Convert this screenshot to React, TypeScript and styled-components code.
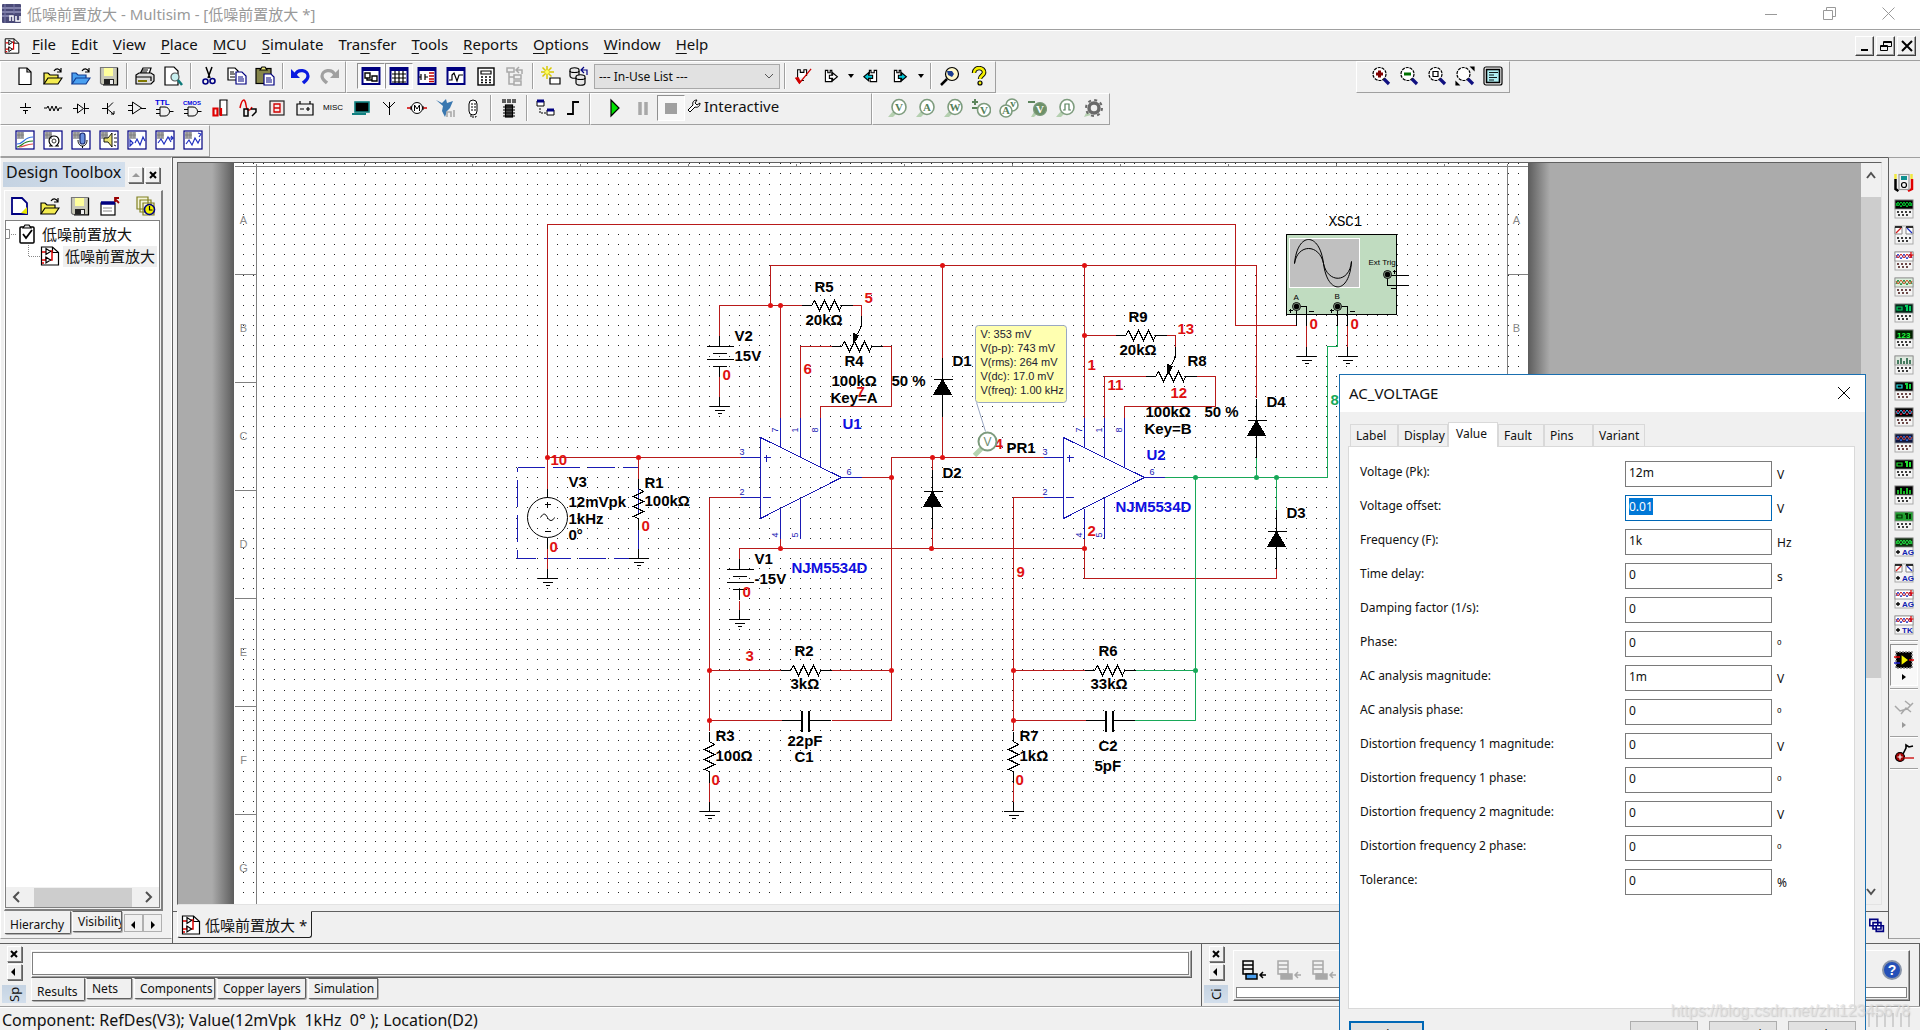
import React, { useEffect, useRef } from "react";
import styled, { createGlobalStyle, css } from "styled-components";

const UI = `"Noto Sans", "Noto Sans CJK SC", sans-serif`;
const FACE = "#f0f0f0";
const NAVY = "#000080";

const Global = createGlobalStyle`
  * { box-sizing: border-box; }
  html, body { margin: 0; height: 100%; overflow: hidden; }
  body { background: ${FACE}; font-family: ${UI}; font-size: 15px; color: #111; }
  button, input, select { font-family: inherit; color: inherit; }
`;

const raised = css`
  border: 1px solid;
  border-color: #fff #808080 #808080 #fff;
`;

/* ---------- window chrome ---------- */

const Screen = styled.div`
  position: relative;
  display: flex;
  flex-direction: column;
  height: 100vh;
  overflow: hidden;
  background: ${FACE};
`;

const TitleBar = styled.header`
  flex: none;
  display: flex;
  align-items: center;
  height: 30px;
  padding: 0 0 2px 2px;
  background: #fff;
  border-bottom: 1px solid #a0a0a0;
  color: #999;
  line-height: 24px;
  & > svg { margin-right: 6px; }
`;

const WindowButtons = styled.div`
  display: flex;
  margin-left: auto;
  padding-right: 2px;
`;

const WindowButton = styled.button`
  display: grid;
  place-items: center;
  width: 59px;
  height: 24px;
  padding: 0;
  border: 0;
  background: none;
  color: #999;
`;

const MenuBar = styled.nav`
  flex: none;
  display: flex;
  align-items: center;
  height: 31px;
  padding: 0 4px;
  border-top: 1px solid #fff;
  border-bottom: 1px solid #a0a0a0;
  & > svg { margin-right: 4px; }
`;

const MenuItem = styled.button`
  padding: 0 7px 4px 8px;
  border: 0;
  background: none;
  font-size: 15px;
  line-height: 24px;
  u { text-underline-offset: 3px; }
`;

const MdiButtons = styled.div`
  display: flex;
  gap: 2px;
  margin-left: auto;
`;

const MdiButton = styled.button`
  width: 19px;
  height: 20px;
  padding: 0;
  background: ${FACE};
  border: 1px solid;
  border-color: #fff #404040 #404040 #fff;
  box-shadow: inset -1px -1px #a0a0a0;
  display: grid;
  place-items: center;
`;

/* ---------- toolbars ---------- */

const ToolRow = styled.div`
  flex: none;
  display: flex;
  height: 32px;
`;

const Toolbar = styled.div<{ $push?: number }>`
  display: flex;
  align-items: center;
  padding: 0 2px 2px 10px;
  margin-left: ${(p) => p.$push ?? 0}px;
  border: 1px solid;
  border-color: #fff #a0a0a0 #a0a0a0 #fff;
`;

const ToolButton = styled.button<{ $w?: number; $on?: boolean }>`
  flex: none;
  display: grid;
  place-items: center;
  width: ${(p) => p.$w ?? 28}px;
  height: 26px;
  padding: 0;
  border: 1px solid transparent;
  background: none;
  ${(p) =>
    p.$on &&
    css`
      background: #f8f8f8;
      border-color: #909090 #fff #fff #909090;
    `}
`;

const Divider = styled.i`
  width: 2px;
  height: 26px;
  margin: 0 3px;
  border-left: 1px solid #a0a0a0;
  border-right: 1px solid #fff;
`;

const InUseList = styled.select`
  width: 186px;
  height: 25px;
  padding: 0 4px;
  margin: 0 1px;
  border: 1px solid #a8a8a8;
  border-radius: 0;
  appearance: none;
  font-size: 12px;
  background: #e1e1e1;
`;

const SelectWrap = styled.label`
  display: flex;
  align-items: center;
  & > svg { margin-left: -17px; margin-right: 7px; pointer-events: none; }
`;

const Interactive = styled.button`
  display: flex;
  align-items: center;
  gap: 3px;
  width: 184px;
  padding: 0 0 4px 2px;
  border: 0;
  background: none;
  font-size: 15px;
  line-height: 22px;
`;

/* ---------- main area ---------- */

const Main = styled.main`
  flex: 1;
  min-height: 0;
  display: flex;
`;

const Side = styled.aside`
  flex: none;
  display: flex;
  flex-direction: column;
  width: 172px;
  padding: 4px 8px 0 3px;
  margin-bottom: 4px;
  border: 1px solid;
  border-color: #a0a0a0 #fff #a0a0a0 #fff;
`;

const SideHead = styled.div`
  display: flex;
  align-items: center;
  gap: 2px;
`;

const SideTitle = styled.h2`
  width: 122px;
  height: 25px;
  margin: 0 1px 0 -1px;
  padding-left: 3px;
  background: linear-gradient(90deg, #c5d3e2, #d3dfec);
  font-size: 16px;
  font-weight: 400;
  line-height: 20px;
  white-space: nowrap;
`;

const SmallButton = styled.button`
  display: grid;
  place-items: center;
  width: 15px;
  height: 16px;
  padding: 0;
  background: ${FACE};
  ${raised}
  box-shadow: 1px 1px #606060;
`;

const SideBody = styled.div`
  flex: 1;
  min-height: 0;
  display: flex;
  flex-direction: column;
  margin-top: 3px;
  width: 159px;
  border: solid;
  border-width: 1px 2px 2px 1px;
  border-color: #fff #808080 #808080 #fff;
`;

const SideTools = styled.div`
  display: flex;
  align-items: center;
  height: 29px;
  padding-left: 5px;
  gap: 10px;
  & > :last-child { margin-left: 6px; }
`;

const SideTool = styled.button`
  width: 20px;
  height: 20px;
  padding: 0;
  border: 0;
  background: none;
`;

const Tree = styled.div`
  flex: 1;
  min-height: 0;
  display: flex;
  flex-direction: column;
  background: #fff;
  border: 1px solid #808080;
  margin: 0 1px 1px 0;
`;

const TreeRow = styled.div<{ $level: number }>`
  display: flex;
  align-items: center;
  height: 22px;
  margin-top: ${(p) => (p.$level ? 0 : 2)}px;
  padding-left: ${(p) => (p.$level ? 21 : 0)}px;
  white-space: nowrap;
  overflow: hidden;
  & > svg { flex: none; }
`;

const TreeText = styled.span<{ $sel?: boolean }>`
  padding: 0 2px 1px;
  margin-left: 3px;
  line-height: 20px;
  background: ${(p) => (p.$sel ? "#efefef" : "transparent")};
`;

const HScroll = styled.div`
  display: flex;
  align-items: center;
  justify-content: space-between;
  height: 20px;
  margin-top: auto;
  padding: 0 5px;
  background: ${FACE};
  & > i { width: 98px; height: 19px; background: #cdcdcd; }
`;

const Tabs = styled.div`
  display: flex;
  align-items: flex-start;
  height: 27px;
`;

const Tab = styled.button<{ $on?: boolean; $w: number }>`
  width: ${(p) => p.$w}px;
  height: ${(p) => (p.$on ? 23 : 21)}px;
  padding: ${(p) => (p.$on ? 3 : 0)}px 0 0 5px;
  overflow: hidden;
  background: ${FACE};
  border: 1px solid;
  border-color: ${(p) => (p.$on ? "transparent" : "#606060")} #606060 #606060 #fff;
  border-radius: 0 0 2px 2px;
  box-shadow: 1px 1px #b0b0b0;
  margin-right: ${(p) => (p.$on ? 1 : 2)}px;
  font-size: 12px;
  line-height: 17px;
  text-align: left;
  white-space: nowrap;
`;

const Spin = styled.button`
  width: 19px;
  height: 18px;
  margin-top: 3px;
  padding: 0;
  border: 1px solid #b0b0b0;
  background: ${FACE};
`;

const Doc = styled.section`
  flex: 1;
  min-width: 0;
  display: flex;
  flex-direction: column;
  border-top: 1px solid #606060;
  border-left: 1px solid #606060;
`;

const DocView = styled.div`
  flex: 1;
  min-height: 0;
  display: flex;
  margin: 4px 6px 6px 4px;
  border: 1px solid;
  border-color: #606060 #e3e3e3 #e3e3e3 #606060;
  background: #ababab;
`;

const PaperClip = styled.div`
  flex: 1;
  min-width: 0;
  display: flex;
  overflow: hidden;
`;

const Margin = styled.div<{ $right?: boolean }>`
  flex: ${(p) => (p.$right ? "1 0 0" : "0 0 56px")};
  background: ${(p) =>
    p.$right
      ? "linear-gradient(90deg, #5c5c5c, #ababab 22px)"
      : "linear-gradient(270deg, #5c5c5c, #ababab 22px)"};
`;

const Sheet = styled.svg`
  flex: none;
  display: block;
  background: #fff;
  font: bold 15px "Liberation Sans", Arial, sans-serif;
`;

const VScroll = styled.div`
  flex: none;
  display: flex;
  flex-direction: column;
  align-items: center;
  justify-content: space-between;
  width: 20px;
  padding: 6px 0;
  background: ${FACE};
  & > i {
    flex: none;
    align-self: stretch;
    height: 66%;
    margin-bottom: auto;
    margin-top: 16px;
    background: #cdcdcd;
  }
`;

const DocTabs = styled.div`
  flex: none;
  display: flex;
  justify-content: space-between;
  height: 32px;
  padding: 0 2px 0 4px;
  border-top: 1px solid #606060;
`;

const DocTab = styled.button`
  display: flex;
  align-items: center;
  gap: 4px;
  height: 27px;
  margin-top: -1px;
  padding: 0 4px 0 3px;
  border: 1px solid #202020;
  border-top-color: ${FACE};
  border-left-color: #fff;
  border-radius: 0 0 3px 3px;
  background: ${FACE};
  font-size: 15px;
  line-height: 22px;
  white-space: nowrap;
`;

const Instruments = styled.div`
  flex: none;
  display: flex;
  flex-direction: column;
  align-items: center;
  width: 32px;
  margin-bottom: 4px;
  padding: 12px 2px 0 0;
  border: 1px solid #a0a0a0;
  border-left-color: #606060;
  border-right: 0;
`;

const InstrumentButton = styled.button<{ $h?: number; $on?: boolean }>`
  flex: none;
  display: flex;
  flex-direction: column;
  align-items: center;
  justify-content: center;
  gap: 3px;
  width: 28px;
  height: ${(p) => p.$h ?? 26}px;
  padding: 0;
  background: ${(p) => (p.$on ? "#f8f8f8" : "none")};
  border: 1px solid;
  border-color: ${(p) => (p.$on ? "#909090 #fff #fff #909090" : "transparent")};
`;

const Rule = styled.i`
  flex: none;
  width: 28px;
  height: 2px;
  margin: 2px 0;
  background: #a0a0a0;
  border-bottom: 1px solid #fff;
`;

/* ---------- bottom dock ---------- */

const Dock = styled.section`
  flex: none;
  display: flex;
  height: 64px;
  border-top: 1px solid #606060;
  border-bottom: 1px solid #a0a0a0;
`;

const DockPane = styled.div<{ $grow: string }>`
  flex: ${(p) => p.$grow};
  min-width: 0;
  display: flex;
  gap: 5px;
  padding-right: 9px;
  border-right: 1px solid #606060;
`;

const Grip = styled.div`
  display: flex;
  flex-direction: column;
  align-items: center;
  gap: 2px;
  width: 26px;
  padding: 2px 0 0 2px;
`;

const GripLabel = styled.span`
  display: grid;
  place-items: center;
  width: 24px;
  height: 18px;
  margin-top: 3px;
  background: linear-gradient(#d3dfec, #c5d3e2);
  writing-mode: vertical-rl;
  transform: rotate(180deg);
  font-size: 13px;
  line-height: 16px;
`;

const DockBody = styled.div`
  flex: 1;
  min-width: 0;
  display: flex;
  flex-direction: column;
  padding-top: 6px;
`;

const ResultBox = styled.div`
  height: 28px;
  border: 1px solid;
  border-color: #fff #606060 #606060 #fff;
  padding: 1px 2px 2px 0;
  box-shadow: inset -1px -1px #a0a0a0;
  & > div { height: 23px; background: #fff; border: 1px solid #808080; }
`;

const CircuitBox = styled.div`
  display: flex;
  flex-direction: column;
  height: 51px;
  padding: 2px;
  border: 1px solid;
  border-color: #fff #606060 #606060 #fff;
  box-shadow: inset -1px -1px #a0a0a0;
`;

const CircuitTools = styled.div`
  flex: 1;
  display: flex;
  align-items: center;
  gap: 7px;
  padding: 0 5px 0 4px;
  & > :last-child { margin-left: auto; }
`;

const CircuitList = styled.div`
  height: 11px;
  background: #fff;
  border: 1px solid #808080;
`;

const Status = styled.footer`
  flex: none;
  display: flex;
  align-items: center;
  justify-content: space-between;
  height: 23px;
  padding: 2px 6px 0 2px;
  border-top: 1px solid #fff;
  font-size: 16px;
  line-height: 18px;
  white-space: pre;
`;

/* ---------- dialog ---------- */

const Dialog = styled.section`
  position: absolute;
  top: 374px;
  right: 54px;
  width: 527px;
  height: 700px;
  background: ${FACE};
  border: 1px solid #1a6fb0;
`;

const DialogHead = styled.div`
  display: flex;
  align-items: center;
  justify-content: space-between;
  height: 37px;
  padding: 0 12px 2px 9px;
  background: #fff;
  h1 { margin: 0; font-size: 15px; font-weight: 400; line-height: 20px; }
`;

const CloseButton = styled.button`
  display: grid;
  place-items: center;
  width: 18px;
  height: 20px;
  padding: 0;
  border: 0;
  background: none;
`;

const DialogTabs = styled.div`
  display: flex;
  align-items: flex-end;
  height: 34px;
  padding: 0 10px;
`;

const DialogTab = styled.button<{ $w: number; $on?: boolean }>`
  position: relative;
  width: ${(p) => p.$w}px;
  height: ${(p) => (p.$on ? 25 : 22)}px;
  padding: 0 0 ${(p) => (p.$on ? 2 : 0)}px ${(p) => (p.$on ? 7 : 5)}px;
  margin-bottom: ${(p) => (p.$on ? -1 : 0)}px;
  text-align: left;
  font-size: 12px;
  line-height: 16px;
  border: 1px solid #d9d9d9;
  border-bottom: 0;
  background: ${(p) => (p.$on ? "#fff" : FACE)};
  z-index: ${(p) => (p.$on ? 1 : 0)};
`;

const Form = styled.form`
  display: flex;
  flex-direction: column;
  gap: 8px;
  height: 563px;
  margin: 0 10px 12px 8px;
  padding: 14px 11px;
  background: #fff;
  border: 1px solid #d9d9d9;
`;

const Field = styled.div`
  display: grid;
  grid-template-columns: 265px 147px 1fr;
  align-items: center;
  height: 26px;
  font-size: 12px;
  line-height: 16px;
  label { padding-bottom: 4px; }
  span { padding: 2px 0 0 5px; }
`;

const Box = styled.input`
  height: 26px;
  padding: 0 3px 3px;
  border: 1px solid #7a7a7a;
  border-radius: 0;
  outline: 0;
  font-size: 12px;
  &:focus { border-color: #0067b5; }
  &::selection { background: #0078d7; color: #fff; }
`;

const DialogButtons = styled.div`
  display: flex;
  gap: 11px;
  padding: 0 9px;
`;

const PushButton = styled.button<{ $main?: boolean }>`
  width: ${(p) => (p.$main ? 75 : 68)}px;
  height: 26px;
  margin-right: ${(p) => (p.$main ? "auto" : 0)};
  padding: 0;
  background: #e1e1e1;
  border: ${(p) => (p.$main ? "2px solid #0067b5" : "1px solid #adadad")};
  font-size: 12px;
`;

const Watermark = styled.div`
  position: absolute;
  right: 10px;
  bottom: 9px;
  font: 16px/20px "Liberation Sans", Arial, sans-serif;
  color: rgba(225, 225, 225, 0.75);
  text-shadow: 1px 1px 1px rgba(170, 170, 170, 0.5);
  pointer-events: none;
`;

/* ---------- icons ---------- */

const Svg = ({ s = 20, w = 1.2, children }: { s?: number; w?: number; children: React.ReactNode }) => (
  <svg width={s} height={s} viewBox="0 0 20 20" fill="none" stroke="#000" strokeWidth={w} aria-hidden="true">
    {children}
  </svg>
);

const SheetIcon = ({ s = 20 }: { s?: number }) => (
  <Svg s={s}>
    <path d="M1.500 1h11l6 5.500V19h-17z" fill="#fff" />
    <path d="M12.500 1v5.500h6" />
    <path d="M2 6h4M2 14h4v-3M10 5h2v9h-2M4 17h-2" stroke="#e00000" strokeWidth="1.500" />
    <path d="M6 2.500v6l4.500-3zM6 11v6l4.500-3z" fill="#fff" />
  </Svg>
);

const floppy = (
  <Svg>
    <path d="M1.500 1.500h17v17H3l-1.500-1.500z" fill="#c8c8b8" stroke="#777" />
    <path d="M18.500 2v17H4" />
    <path d="M5 2h9v8H5z" fill="#ffff9c" stroke="none" />
    <path d="M5 13h10v5.500H5z" fill="#222" stroke="none" />
    <path d="M11 14h3v4h-3z" fill="#eee" stroke="none" />
  </Svg>
);

const folder = (fill: string, edge: string) => (
  <Svg>
    <path d="M1 18V7h4l2 2h8v3" fill={fill} stroke={edge} />
    <path d="M1 18l4-6h14l-4 6z" fill={fill} stroke={edge} />
    <path d="M11 5c2-3 5-3 7 1m0-4v4h-4" />
  </Svg>
);

const page = (
  <Svg>
    <path d="M4 2h8l4 4v12.500H4z" fill="#fff" />
    <path d="M12 2v4h4" />
  </Svg>
);

const gate = (label: string, size: number) => (
  <Svg w={1}>
    <text x="0" y="7" fontSize={size} fontWeight="bold" fontFamily="Liberation Sans" stroke="none" fill="#0000e0">{label}</text>
    <path d="M5 9h5a4.500 4.500 0 0 1 0 9H5zM1 11.500h4M1 15.500h4M14.500 13.500h4" />
  </Svg>
);

const framed = (inner: React.ReactNode) => (
  <Svg>
    <rect x="1" y="1" width="18" height="18" fill="#fff" stroke={NAVY} />
    <rect x="2" y="2" width="7" height="7" fill="#aaa" stroke="none" />
    <path d="M4 2v6M7 2v6M2 5h7" stroke="#777" strokeWidth=".8" />
    {inner}
  </Svg>
);

const panel = (inner: React.ReactNode) => (
  <Svg>
    <rect x="1.500" y="2" width="17" height="16" fill="#fff" stroke={NAVY} strokeWidth="2" />
    <path d="M1 3.500h18" stroke={NAVY} strokeWidth="3" />
    {inner}
  </Svg>
);

const lens = (inner: React.ReactNode) => (
  <Svg>
    <circle cx="8.500" cy="8" r="6.500" fill="#fff" strokeDasharray="3 1" />
    <path d="M13 13l5 5" stroke="#101080" strokeWidth="3.200" />
    {inner}
  </Svg>
);

const G = "#7d9b7d";
const probe = (t: React.ReactNode, dark = false) => (
  <Svg>
    <path d="M7 12l3 3-4 4H1z" fill="#b5d0b0" stroke="none" />
    <ellipse cx="12" cy="9" rx="7" ry="7.500" fill={dark ? "#6d9068" : "#fff"} stroke={G} strokeWidth="1.600" />
    {t}
  </Svg>
);
const letter = (c: string, fill = "#55805a", x = 12, y = 13) => (
  <text x={x} y={y} textAnchor="middle" fontSize="11" fontWeight="bold" fontFamily="Liberation Serif" stroke="none" fill={fill}>{c}</text>
);

const port = (dir: "out" | "in" | "fwd") => (
  <Svg s={16} w={1.4}>
    {dir === "in" ? (
      <>
        <path d="M8 8V3h2v3h4V3h3v14H9v-3" fill="#fff" />
        <path d="M1 11l6-5v3h5v4H7v3z" fill="#00c8d8" />
      </>
    ) : (
      <>
        <path d="M3 3h3v3h3V3h2v14H3z" fill="#fff" />
        <path d="M8 9h4V6l6 5-6 5v-3H8z" fill={dir === "fwd" ? "#00c8d8" : "#fff"} />
      </>
    )}
  </Svg>
);

const icons: Record<string, React.ReactNode> = {
  page,
  open: folder("#f4ec50", "#000"),
  sample: folder("#4aa0f0", "#103a90"),
  save: floppy,
  print: (
    <Svg>
      <path d="M5 8l3-6h8l-2 6" fill="#fff" />
      <path d="M1 9l3-2h12l3 2v6l-3 3H1z" fill="#ddd" />
      <path d="M1 11h15v4M7 4h6M6 6h6" />
      <path d="M3 15h9" stroke="#807800" strokeWidth="2" />
    </Svg>
  ),
  preview: (
    <Svg>
      <path d="M2 1h9l4 4v14H2z" fill="#fff" />
      <circle cx="12" cy="11" r="4" fill="#c8f0f0" stroke="#555" />
      <path d="M15 14l4 5" stroke="#0e7a7a" strokeWidth="2.500" />
    </Svg>
  ),
  cut: (
    <Svg>
      <path d="M7 1l4 11M13 1L9 12" strokeWidth="1.500" />
      <circle cx="6.500" cy="15.500" r="2.500" stroke={NAVY} strokeWidth="1.600" />
      <circle cx="13.500" cy="15" r="2.500" stroke={NAVY} strokeWidth="1.600" />
    </Svg>
  ),
  copy: (
    <Svg>
      <path d="M1 2h7l3 3v9H1z" fill="#fff" />
      <path d="M3 6h4M3 8h5M3 11h5" />
      <path d="M9 6h6l4 4v8H9z" fill="#fff" stroke={NAVY} />
      <path d="M11 11h5M11 13h6M11 15h6" stroke={NAVY} />
    </Svg>
  ),
  paste: (
    <Svg>
      <rect x="1" y="2.500" width="15" height="15" fill="#86864a" />
      <path d="M5 4l2-3h3l2 3z" fill="#f4f080" />
      <path d="M9 8h7l3 3v8H9z" fill="#fff" stroke={NAVY} />
      <path d="M11 12h5M11 14h6M11 16h6" stroke={NAVY} />
    </Svg>
  ),
  undo: (
    <Svg>
      <path d="M4 9c3-7 13-5 13 1 0 4-3 5-5 7" stroke="#0a1ae0" strokeWidth="3.200" />
      <path d="M0 3v9h9z" fill="#0a1ae0" stroke="none" />
    </Svg>
  ),
  redo: (
    <Svg>
      <path d="M16 9C13 2 3 4 3 10c0 4 3 5 5 7" stroke="#a0a0a0" strokeWidth="3.200" />
      <path d="M20 3v9h-9z" fill="#a0a0a0" stroke="none" />
    </Svg>
  ),
  toolbox: panel(<path d="M4 7h5v5H4zM11 10h5v5h-5zM6 12v2h5" strokeWidth="1.400" />),
  sheetview: panel(<path d="M3 8h14M3 12h14M3 16h14M6 5v12M10 5v12M14 5v12" stroke="#000" />),
  spice: panel(
    <>
      <path d="M4 8v6M8 8v6M2 11h2M8 11h3" />
      <path d="M12 7h5M12 10h5M12 13h5M12 15.500h5" stroke="#c00000" strokeWidth="1.500" />
    </>
  ),
  grapher: panel(<path d="M3 14h3V9l2-2 3 8 2-6h4" />),
  calc: (
    <Svg>
      <rect x="2" y="2" width="16" height="17" fill="#fff" strokeWidth="1.400" />
      <path d="M5 5h10v3H5z" />
      <path d="M5 11h10M5 14h10M5 16.500h10" strokeDasharray="2 2" strokeWidth="1.500" />
    </Svg>
  ),
  hier: (
    <Svg>
      <path d="M2 2h7v4H2zM4 6v12h5M4 11h5M9 9h7v4H9zM9 15h7v4H9zM12 4h5v4M14 1l-3 3 3 3" stroke="#a8a8a8" strokeWidth="1.500" />
    </Svg>
  ),
  star: (
    <Svg>
      <path d="M6 0v13M0 6h13M1.500 1.500l9 9M10.500 1.500l-9 9" stroke="#d8c800" strokeWidth="1.500" />
      <circle cx="6" cy="6" r="2" fill="#ffff60" stroke="none" />
      <path d="M9 12h10v6H9z" fill="#fff" />
    </Svg>
  ),
  db: (
    <Svg>
      <path d="M1 4c0-3 9-3 9 0v6c0 3-9 3-9 0z" fill="#e8e8e8" />
      <path d="M7 11c0-3 9-3 9 0v6c0 3-9 3-9 0z" fill="#e8e8e8" />
      <path d="M1 5c0 2 9 2 9 0M7 12c0 2 9 2 9 0" />
      <path d="M13 4h5v5M15 1l-3 3 3 3" stroke={NAVY} />
    </Svg>
  ),
  erc: (
    <Svg s={18}>
      <path d="M4 12V3h3v3h4V3h3v7M8 15h3" fill="#fff" />
      <path d="M2 12l4 6L19 2" stroke="#d00000" strokeWidth="1.400" />
      <path d="M1 12l4-1 2 4 2 0-3 4z" fill="#d00000" stroke="none" />
    </Svg>
  ),
  out: port("out"),
  back: port("in"),
  fwd: port("fwd"),
  find: (
    <Svg>
      <circle cx="12" cy="8" r="6.500" fill="#fff8c8" />
      <path d="M7 5h5l2 3-2 3-4-2z" fill="#1a3c90" stroke="none" />
      <path d="M7 13l-6 6" strokeWidth="2.500" />
    </Svg>
  ),
  help: (
    <Svg>
      <path d="M5 7c0-7 11-6 10 0-1 3-4 3-4 6" stroke="#000" strokeWidth="4.500" />
      <path d="M5 7c0-7 11-6 10 0-1 3-4 3-4 6" stroke="#f4f000" strokeWidth="2.600" />
      <circle cx="11" cy="17" r="2" fill="#f4f000" />
    </Svg>
  ),
  zin: lens(<path d="M8.500 4.500v7M5 8h7" stroke="#800000" strokeWidth="3" />),
  zout: lens(<path d="M5 8h7" stroke="#007000" strokeWidth="3" />),
  zarea: lens(<path d="M6 5.500h5v5H6z" />),
  zfit: lens(<path d="M16 1h3v3zM1 16v3h3z" fill="#000" />),
  full: (
    <Svg>
      <rect x="1" y="1" width="18" height="18" rx="2" fill="#fff" />
      <rect x="3.500" y="3.500" width="13" height="13" fill="#b0f0f4" strokeWidth="1.600" />
      <path d="M6 6.500h9M6 9h5M6 11.500h8M6 14h5" strokeWidth=".9" />
    </Svg>
  ),
  source: <Svg w={1}><path d="M10.500 5v4M5 9.500h11M8 12.500h5M10.500 12v4" /></Svg>,
  basic: <Svg w={1}><path d="M1 10h3l1-2 2 5 2-5 2 5 2-5 2 5 1-3h3" /></Svg>,
  diode: <Svg w={1}><path d="M2 10.500h5M6.500 6v9l6-4.500zM13.500 5v11M14 10.500h4" /></Svg>,
  bjt: <Svg w={1}><path d="M3 10.500h5M8.500 5v11M9 9.500l5-5M9 11.500l6 5M12 16h3v-3" /></Svg>,
  analog: <Svg w={1}><path d="M5.500 4v12l9-6zM1 7.500h4M1 12.500h4M14 10.500h5" /></Svg>,
  ttl: gate("TTL", 8),
  cmos: gate("CMOS", 6),
  misc01: (
    <Svg>
      <path d="M9 2h7v15H9z" fill="#fff" stroke="#000" />
      <path d="M2.500 10.500h4v7h-4zM10 10v8" stroke="#e00000" strokeWidth="2.200" />
      <path d="M16.500 3v14" stroke="#888" />
    </Svg>
  ),
  mixed: (
    <Svg>
      <path d="M1 10c2-10 5-10 6-3s4 6 6 2" stroke="#e00000" strokeWidth="1.500" />
      <path d="M5 11h4v7H5zM12 11h5v3l-4 4" strokeWidth="1.500" />
    </Svg>
  ),
  ind: (
    <Svg>
      <rect x="3" y="3" width="14" height="14" fill="#f4e8e8" stroke="#222" />
      <path d="M7 6h6v8H7zM7 10h6" stroke="#d00000" strokeWidth="1.300" />
    </Svg>
  ),
  power: <Svg><path d="M2 6h16v11H2zM5 6V3M15 6V3M5 11h4M11 11h4M13 9v4" /></Svg>,
  misc: (
    <Svg>
      <text x="0" y="12" fontSize="8" fontFamily="Liberation Sans" stroke="none" fill="#000">MISC</text>
    </Svg>
  ),
  adv: (
    <Svg>
      <rect x="4" y="4" width="14" height="10" fill="#000" stroke="#108080" strokeWidth="1.600" />
      <path d="M1 16h14" stroke="#108080" strokeWidth="2" />
    </Svg>
  ),
  rf: <Svg w={1}><path d="M4 4l6 6 6-6M10.500 4v13" /></Svg>,
  motor: (
    <Svg w={1}>
      <path d="M0 10h4M16 10h4" stroke="#d00000" strokeWidth="1.500" />
      <circle cx="10" cy="10" r="5.500" fill="#fff" />
      <path d="M7.500 13V7l2.500 4 2.500-4v6M4 8v4M16 8v4" />
    </Svg>
  ),
  ni: (
    <Svg>
      <path d="M1 2l6 3 4-4 1 4 6-2-3 7-3 3-2 6-3-6 1-5z" fill="#3a78b0" stroke="none" />
      <path d="M12 19v-5h4v5M19 12v7" stroke="#aaa" strokeWidth="1.600" />
    </Svg>
  ),
  conn: <Svg w={1}><rect x="6" y="2" width="8" height="15" rx="4" fill="#fff" /><path d="M9 5v9M12 5v9M8 17v2h5v-2" strokeDasharray="2 1" /></Svg>,
  mcu: (
    <Svg>
      <path d="M4 1v4M6 1v4M9 1v4M11 1v4M14 1v4M16 1v4" />
      <rect x="6.500" y="7" width="7" height="12" fill="#444" />
      <path d="M4 9h12M4 12h12M4 15h12M4 18h12" strokeWidth="1.200" />
    </Svg>
  ),
  block: (
    <Svg w={1}>
      <path d="M2 3h7v5H2zM12 12h7v5h-7z" fill="#fff" />
      <path d="M2 3h7M12 12h7" stroke={NAVY} strokeWidth="3" />
      <path d="M5 10v5h6" strokeDasharray="2 1" />
    </Svg>
  ),
  bus: <Svg><path d="M4 16h6V4h6" strokeWidth="1.800" /></Svg>,
  play: <Svg><path d="M6 2v16l8-8z" fill="#00e000" /></Svg>,
  pause: <Svg><path d="M7 4v13M13 4v13" stroke="#a8a8a8" strokeWidth="3.500" /></Svg>,
  stop: <Svg><path d="M4 5h12v11H4z" fill="#a0a0a0" stroke="none" /></Svg>,
  pv: probe(letter("V")),
  pa: probe(letter("A")),
  pw: probe(letter("W")),
  pvv: (
    <Svg>
      <path d="M4 1v6M1 4h6M1 10h6" stroke="#5d855d" strokeWidth="2" />
      <circle cx="13" cy="12" r="6.500" fill="#fff" stroke={G} strokeWidth="1.600" />
      {letter("V", "#55805a", 13, 16)}
    </Svg>
  ),
  pva: (
    <Svg>
      <circle cx="13" cy="7" r="6" fill="#fff" stroke={G} strokeWidth="1.600" />
      <circle cx="7" cy="13" r="6" fill="#fff" stroke={G} strokeWidth="1.600" />
      {letter("A", "#55805a", 7, 16)}
      {letter("v", "#55805a", 14, 9)}
    </Svg>
  ),
  pref: (
    <Svg>
      <path d="M1 4h7" stroke="#5d855d" strokeWidth="2" />
      <path d="M7 14l3 2-3 3H4z" fill="#b5d0b0" stroke="none" />
      <circle cx="13" cy="11" r="6.500" fill="#6d9068" stroke={G} />
      {letter("V", "#fff", 13, 15)}
    </Svg>
  ),
  pdig: probe(<path d="M8 12h2V6h4v6h2" stroke="#55805a" />),
  pset: (
    <Svg>
      <path d="M1 19l3-6 4 4z" fill="#b5d0b0" stroke="none" />
      <circle cx="11" cy="10" r="5" stroke="#6a6a6a" strokeWidth="3.500" />
      <circle cx="11" cy="10" r="8" stroke="#6a6a6a" strokeWidth="2" strokeDasharray="3 3.280" />
    </Svg>
  ),
  f1: framed(<><path d="M2 17c6 0 4-6 16-6" stroke="#208020" /><path d="M2 14c8 0 6-7 16-7" stroke="#3070e0" /><path d="M4 17c6 0 6-3 14-3" stroke="#e05050" /></>),
  f2: framed(<><path d="M6 16h3c-5-4-3-10 2-10s7 6 2 10h3" /><circle cx="11" cy="11" r="2" strokeWidth=".8" /></>),
  f3: framed(<><rect x="9" y="3" width="5" height="11" rx="2.500" fill="#6a90e0" stroke="#1a2a70" /><path d="M7 10c0 8 9 8 9 0M11.500 16v2" strokeWidth="1" /></>),
  f4: framed(<><path d="M5 8h4l4-5v14l-4-5H5z" fill="#e8e070" strokeWidth=".9" /><path d="M15 5l2-1M15 8h3M15 12h3M15 15l2 1" strokeWidth=".9" /></>),
  f5: framed(<path d="M3 10l3 3-3 3zM8 13l2-4 3 6 3-8 2 4" stroke="#2030c0" />),
  f6: framed(<path d="M3 13l3-4 3 5 4-7 3 5M13 8h5l-2-2m2 2l-2 2" stroke="#2030c0" />),
  f7: framed(<path d="M3 14l3-4 3 5 3-7 3 5 2-4M15 3l3 1-2 3" stroke="#2030c0" />),
};

/* ---------- instruments column ---------- */

type Inst = { name: string; bg: string; ink: string; ink2?: string; tag?: string; kind: "wave" | "bars" | "text" | "blocks" | "meter" | "split" };

const instruments: Inst[] = [
  { name: "Multimeter", bg: "#fff", ink: "#000", kind: "meter" },
  { name: "Function generator", bg: "#000", ink: "#00d030", kind: "wave" },
  { name: "Wattmeter", bg: "#fff", ink: "#000", kind: "split" },
  { name: "Oscilloscope", bg: "#fff", ink: "#2030c0", ink2: "#d02020", kind: "wave" },
  { name: "Four channel oscilloscope", bg: "#ded", ink: "#108030", ink2: "#d05020", kind: "wave" },
  { name: "Bode plotter", bg: "#002818", ink: "#00d060", kind: "blocks" },
  { name: "Frequency counter", bg: "#002000", ink: "#20ff40", kind: "text", tag: "123" },
  { name: "Word generator", bg: "#dfe8df", ink: "#206040", kind: "bars" },
  { name: "Logic converter", bg: "#000", ink: "#20e0e8", ink2: "#10d040", kind: "blocks" },
  { name: "Logic analyzer", bg: "#000", ink: "#e02040", ink2: "#30b0f0", kind: "wave" },
  { name: "IV analyzer", bg: "#101840", ink: "#3070e0", ink2: "#d04030", kind: "wave" },
  { name: "Distortion analyzer", bg: "#000", ink: "#20e030", kind: "blocks" },
  { name: "Spectrum analyzer", bg: "#000", ink: "#20e030", kind: "bars" },
  { name: "Network analyzer", bg: "#20a030", ink: "#003000", kind: "blocks" },
  { name: "Agilent function generator", bg: "#103010", ink: "#20e040", kind: "wave", tag: "AG" },
  { name: "Agilent multimeter", bg: "#fff", ink: "#101060", kind: "split", tag: "AG" },
  { name: "Agilent oscilloscope", bg: "#fff", ink: "#2030c0", ink2: "#d02020", kind: "wave", tag: "AG" },
  { name: "Tektronix oscilloscope", bg: "#fff", ink: "#2030c0", ink2: "#d02020", kind: "wave", tag: "TK" },
];

const InstrumentIcon = ({ bg, ink, ink2, tag, kind }: Inst) => {
  const small = tag && tag.length === 2;
  if (kind === "meter")
    return (
      <Svg>
        <path d="M1.500 1v5M17.500 1v5" stroke="#f0e840" strokeWidth="2.500" />
        <path d="M1.500 6v10l3 2" strokeWidth="2.500" />
        <path d="M18 6v10l-4 2" stroke="#e00000" strokeWidth="2.500" />
        <rect x="5" y="1.500" width="10" height="15" fill="#f4f4f4" stroke="#999" />
        <rect x="7" y="3" width="6" height="4" fill="#109090" stroke="none" />
        <circle cx="10" cy="12" r="2.500" />
      </Svg>
    );
  return (
    <Svg>
      <rect x="1" y="1" width="18" height="18" fill="#f4f4f4" stroke="#aaa" strokeWidth="1" />
      {kind === "split" ? (
        <>
          <path d="M1 2h7v7H1zM12 2h7v7h-7z" fill="#fff" stroke="#888" strokeWidth="1" />
          <path d="M2 8l5-5" stroke="#d02020" />
          <path d="M13 3l5 5" stroke="#2030c0" />
          <path d="M1 2h7M12 2h7" strokeWidth="1.600" />
        </>
      ) : (
        <rect x="1" y="1" width="18" height="9" fill={bg} stroke="#888" strokeWidth=".8" />
      )}
      {kind === "wave" && (
        <>
          <path d="M2 7l2-4 3 5 3-5 3 5 3-5 2 4" stroke={ink} strokeWidth="1" />
          <path d="M2 4l2 3 3-4 3 4 3-4 3 4 2-3" stroke={ink2 ?? ink} strokeWidth="1" />
        </>
      )}
      {kind === "bars" && <path d="M4 9V5M7 9V3M10 9V6M13 9V3M16 9V5" stroke={ink} strokeWidth="1.600" />}
      {kind === "blocks" && (
        <>
          <path d="M3 4h5v3H3z" stroke={ink} />
          <path d="M11 3h2v5M16 3v5" stroke={ink2 ?? ink} strokeWidth="2" />
        </>
      )}
      {kind === "text" && (
        <text x="3" y="9" fontSize="8" fontWeight="bold" fontFamily="Liberation Sans" stroke="none" fill={ink}>{tag}</text>
      )}
      {small ? (
        <>
          <path d="M2 15h4M4 13v4" strokeWidth="1.300" />
          <text x="8" y="18" fontSize="8" fontWeight="bold" fontFamily="Liberation Sans" stroke="none" fill="#1020b0">{tag}</text>
        </>
      ) : (
        <path d="M3 13h14M4 16h12" strokeDasharray="2 2" strokeWidth="1.600" stroke={ink2 ? "#401010" : "#000"} />
      )}
      {bg === "#fff" && kind === "wave" && <path d="M17 1v6M14.500 4h5" stroke="#e00000" />}
    </Svg>
  );
};

/* ---------- schematic ---------- */

const RED = "#b81a1a";
const NET = "#e01212";
const GREEN = "#18a858";
const BLUE = "#1a1ab4";
const PITCH = 10.12;

const dots = (() => {
  let d = "";
  for (let r = -1; r < 72; r++) {
    const y = Math.floor(173.95 + r * PITCH);
    for (let c = 0; c < 127; c++) d += `M${Math.floor(243.75 + c * PITCH)} ${y}h1`;
  }
  return d;
})();

const ground = (x: number, y: number) => `M${x} ${y - 10}V${y}M${x - 10} ${y}h20M${x - 5} ${y + 4}h10M${x - 2} ${y + 7}h4`;
const hRes = (x: number, y: number) =>
  `M${x - 10} ${y}h10l3 -5l5 10l5 -10l5 10l5 -10l5 10l2 -5h11`;
const vRes = (x: number, y: number) =>
  `M${x} ${y - 10}v10l5 3l-10 5l10 5l-10 5l10 5l-10 5l5 2v11`;
const battery = (x: number, y: number) =>
  `M${x} ${y - 11}V${y}M${x - 13} ${y}h27M${x - 7} ${y + 7}h14M${x - 13} ${y + 13}h27M${x - 7} ${y + 20}h14M${x} ${y + 20}v10`;
const diode = (x: number, y: number) =>
  `M${x} ${y - 22}V${y}M${x - 9} ${y}h19M${x} ${y + 15}v22`;

const Diode = ({ x, y }: { x: number; y: number }) => (
  <>
    <path d={diode(x, y)} />
    <path d={`M${x} ${y}l9 15h-18z`} fill="#000" />
  </>
);

const Capacitor = ({ x, y }: { x: number; y: number }) => (
  <>
    <path d={`M${x - 20} ${y}h20M${x + 7} ${y}h22`} />
    <path d={`M${x} ${y - 10}v21M${x + 7} ${y - 10}v21`} strokeWidth="2" />
  </>
);

const Wiper = ({ x, y }: { x: number; y: number }) => (
  <>
    <path d={`M${x} ${y}v10l-4 9`} />
    <path d={`M${x - 8} ${y + 18}l5 2l-5 8z`} fill="#000" />
  </>
);

const sidePins: [string, number, number][] = [["3", -21, -23], ["2", -21, 17], ["6", 86, -3]];
const railPins: [string, number, number][] = [["7", 17, -45], ["1", 37, -45], ["8", 57, -45], ["4", 17, 60], ["5", 37, 60]];

/* x is the flat edge of the body; rail is where the supply pins are measured from */
const OpAmp = ({ x, y, rail = x }: { x: number; y: number; rail?: number }) => (
  <g stroke={BLUE}>
    <path d={`M${x} ${y - 40}v81l81 -41zM${x - 20} ${y - 20}h20M${x - 20} ${y + 20}h20M${x + 81} ${y}h20`} />
    <path d={`M${rail + 20} ${y - 60}v30M${rail + 40} ${y - 60}v40M${rail + 60} ${y - 60}v50M${rail + 20} ${y + 31}v30M${rail + 40} ${y + 20}v41`} />
    <path d={`M${x + 3} ${y - 20}h7M${x + 6} ${y - 23}v7M${x + 2} ${y + 20}h8`} />
    <g fill={BLUE} stroke="none" fontSize="9" fontWeight="400">
      {sidePins.map(([t, dx, dy]) => (
        <text key={t} x={x + dx} y={y + dy}>{t}</text>
      ))}
      {railPins.map(([t, dx, dy]) => (
        <text key={t} transform={`translate(${rail + dx} ${y + dy}) rotate(-90)`}>{t}</text>
      ))}
    </g>
  </g>
);

const Terminal = ({ x, y }: { x: number; y: number }) => (
  <g shapeRendering="auto">
    <circle cx={x} cy={y} r="4" fill="#c0dcc0" />
    <circle cx={x} cy={y} r="2.500" fill="#000" />
  </g>
);

type Label = [string, number, number];
const black: Label[] = [
  ["R5", 814, 291], ["20kΩ", 805, 324], ["V2", 734, 340], ["15V", 734, 360], ["R4", 844, 365],
  ["100kΩ", 831, 385], ["Key=A", 830, 402], ["50 %", 891, 385], ["R1", 644, 487], ["100kΩ", 644, 505],
  ["V3", 568, 486], ["12mVpk", 568, 506], ["1kHz", 568, 523], ["0°", 568, 539], ["V1", 754, 563],
  ["-15V", 754, 583], ["R2", 794, 655], ["3kΩ", 790, 688], ["22pF", 787, 745], ["C1", 794, 761],
  ["R3", 715, 740], ["100Ω", 715, 760], ["R6", 1098, 655], ["33kΩ", 1090, 688], ["C2", 1098, 750],
  ["5pF", 1094, 770], ["R7", 1019, 740], ["1kΩ", 1019, 760], ["D1", 952, 365], ["D2", 942, 477],
  ["PR1", 1006, 452], ["R9", 1128, 321], ["20kΩ", 1119, 354], ["R8", 1187, 365], ["100kΩ", 1145, 416],
  ["50 %", 1204, 416], ["Key=B", 1144, 433], ["D4", 1266, 406], ["D3", 1286, 517],
];
const nets: Label[] = [
  ["5", 864, 302], ["0", 722, 379], ["6", 803, 373], ["7", 856, 396], ["10", 550, 464], ["0", 641, 530],
  ["0", 549, 551], ["0", 742, 596], ["3", 745, 660], ["0", 711, 784], ["0", 1015, 784], ["9", 1016, 576],
  ["4", 994, 448], ["13", 1177, 333], ["1", 1087, 369], ["11", 1107, 389], ["12", 1170, 397],
  ["2", 1087, 535], ["0", 1309, 328], ["0", 1350, 328],
];
const parts: Label[] = [["U1", 842, 428], ["NJM5534D", 791, 572], ["U2", 1146, 459], ["NJM5534D", 1115, 511]];
const joints = [
  [770, 305], [780, 305], [547, 457], [638, 457], [891, 477], [780, 548], [931, 548], [1084, 548], [942, 265],
  [1084, 265], [1084, 335], [942, 457], [932, 457], [709, 670], [891, 670], [709, 720], [1013, 670], [1013, 720],
];
const greenJoints = [[1195, 477], [1256, 477], [1276, 477], [1195, 670]];
const readings = ["V: 353 mV", "V(p-p): 743 mV", "V(rms): 264 mV", "V(dc): 17.0 mV", "V(freq): 1.00 kHz"];

const Schematic = () => (
  <Sheet width="1294" height="742" viewBox="234 163 1294 742" role="img" aria-label="Low noise preamplifier schematic">
    <path d={dots} stroke="#222" shapeRendering="crispEdges" transform="translate(0 .5)" />
    <g transform="translate(.5 .5)" fill="none" shapeRendering="crispEdges" strokeWidth="1">
      <path
        stroke="#808080"
        d={`M234 166H1528M256 163V905M1507 163V905${[274, 382, 490, 598, 706, 814]
          .map((y) => `M234 ${y}H256M1507 ${y}H1528`)
          .join("")}${[364, 472, 580, 688, 796, 904, 1012, 1120, 1228, 1336, 1444].map((x) => `M${x} 163V166`).join("")}`}
      />
      <g fill="#888" fontSize="11" fontWeight="400" textAnchor="middle">
        {["A", "B", "C", "D", "E", "F", "G"].map((c, i) => (
          <React.Fragment key={c}>
            <text x="243" y={223 + i * 108}>{c}</text>
            <text x="1516" y={223 + i * 108}>{c}</text>
          </React.Fragment>
        ))}
      </g>

      <path stroke={BLUE} strokeDasharray="27 8" d="M517 467H638V558H517V467" />
      <path
        stroke={RED}
        d="M547 488V224H1235V325H1296M770 305V265H1256V397M719 335V305H801M780 305V417M851 305H861V315M831 346H800V417M881 346H891V406H820V417M719 376V397
           M547 457H740M638 457V478M709 497H740M709 497V730M861 477H891M891 720V457H1043M891 720H831M709 720H781M709 670H780M830 670H891M780 538V548M739 558V548H1084M739 600V610
           M547 548V568M709 781V802M1013 781V802M942 265V357M942 416V457M932 457V469M932 528V548M1084 265V417M1084 335H1115M1165 335H1175V346M1145 376H1104V417M1195 376H1215V406H1124V417
           M1043 497H1013V730M1013 670H1084M1013 720H1085M1084 538V578H1276V568M1306 325V346M1347 325V346"
      />
      <path stroke={BLUE} d="M638 518V558" />
      <path stroke={GREEN} d="M1164 477H1327V346H1337V325M1195 477V720H1134M1134 670H1195M1256 457V477M1276 477V510" />

      <g stroke="#000">
        <path d={[hRes(811, 305), hRes(841, 346), hRes(790, 670), hRes(1125, 335), hRes(1155, 376), hRes(1094, 670)].join("")} />
        <path d={[vRes(638, 488), vRes(709, 741), vRes(1013, 741)].join("")} />
        <path d={[battery(719, 346), battery(739, 569)].join("")} />
        <path d={[ground(719, 406), ground(739, 619), ground(547, 578), ground(638, 558), ground(709, 811), ground(1013, 811), ground(1306, 356), ground(1347, 356)].join("")} />
        <Diode x={942} y={379} />
        <Diode x={932} y={491} />
        <Diode x={1256} y={420} />
        <Diode x={1276} y={531} />
        <Capacitor x={801} y={720} />
        <Capacitor x={1105} y={720} />
        <Wiper x={861} y={315} />
        <Wiper x={1175} y={346} />
        <path d="M547 488V497M547 537V548M544 504h6M547 501v6M544 531h6" />
        <g shapeRendering="auto">
          <circle cx="547" cy="517" r="20" />
          <path d="M540 517c3 -5 5 -4 7 0s5 4 7 0" />
        </g>
      </g>

      <OpAmp x={760} y={477} />
      <OpAmp x={1063} y={477} rail={1064} />

      <g stroke="#000">
        <rect x="1286" y="234" width="110" height="80" fill="#c0dcc0" />
        <rect x="1289" y="238" width="70" height="49" fill="#c0c0c0" stroke="#fff" />
        <g shapeRendering="auto">
          <path d="M1294 263C1297 231 1319 231 1323 263S1349 294 1351 261" />
          <path d="M1294 263C1297 243 1319 243 1323 263S1349 283 1351 261" />
        </g>
        <path d="M1296 306V325M1300 306H1306V325M1337 306V325M1341 306H1347V325M1387 275H1408M1387 275V285H1408" />
        <path d="M1288 310h4M1290 308v4M1308 311h5M1329 310h4M1331 308v4M1349 311h5M1392 271h4M1394 269v4M1390 288h5" />
        <Terminal x={1296} y={306} />
        <Terminal x={1337} y={306} />
        <Terminal x={1387} y={274} />
      </g>
      <g fill="#000" fontSize="8" fontWeight="400">
        <text x="1368" y="264">Ext Trig</text>
        <text x="1293" y="299">A</text>
        <text x="1334" y="298">B</text>
      </g>
      <text x="1328" y="225" fill="#000" fontSize="14" fontWeight="400" fontFamily="Liberation Mono">XSC1</text>

      <g shapeRendering="auto">
        {joints.map(([x, y]) => <circle key={`${x}-${y}`} cx={x} cy={y} r="2.500" fill={NET} />)}
        {greenJoints.map(([x, y]) => <circle key={`${x}-${y}`} cx={x} cy={y} r="2.500" fill={GREEN} />)}
      </g>

      <g fill="#000">{black.map(([t, x, y], i) => <text key={i} x={x} y={y}>{t}</text>)}</g>
      <g fill={NET}>{nets.map(([t, x, y], i) => <text key={i} x={x} y={y}>{t}</text>)}</g>
      <g fill="#1010e0">{parts.map(([t, x, y], i) => <text key={i} x={x} y={y}>{t}</text>)}</g>
      <text x="1330" y="404" fill={GREEN}>8</text>

      <g shapeRendering="auto">
        <path d="M976 402L985 431" stroke="#9aa8c4" />
        <rect x="975" y="325" width="91" height="77" rx="3" fill="#ffffb0" stroke="#9aa8c4" />
        <g fill="#223" fontSize="11" fontWeight="400">
          {readings.map((t, i) => <text key={t} x="980" y={337 + i * 14}>{t}</text>)}
        </g>
        <path d="M981 448L974 455" stroke="#b5d3b0" strokeWidth="5" />
        <circle cx="987" cy="441" r="9" fill="#fff" stroke="#7d9b7d" strokeWidth="2" />
        <text x="987" y="445" fill="#6f8c6f" fontSize="12" fontWeight="400" textAnchor="middle">V</text>
      </g>
    </g>
  </Sheet>
);

/* ---------- composition ---------- */

const Chevron = ({ d }: { d: string }) => (
  <svg width="12" height="12" viewBox="0 0 12 12" fill="none" stroke="#505050" strokeWidth="2" aria-hidden="true"><path d={d} /></svg>
);
const Arrow = ({ d, c = "#000" }: { d: string; c?: string }) => (
  <svg width="8" height="8" viewBox="0 0 8 8" fill={c} aria-hidden="true"><path d={d} /></svg>
);
const LEFT = "M5 0v8L1 4z";
const RIGHT = "M2 0v8l4-4z";
const Cross = () => (
  <svg width="8" height="8" viewBox="0 0 8 8" stroke="#000" strokeWidth="2" aria-hidden="true"><path d="M1 1l6 6M7 1L1 7" /></svg>
);

const Tools = ({ list, on = [], wide = [] }: { list: string[]; on?: string[]; wide?: string[] }) => (
  <>
    {list.map((n, i) =>
      n === "|" ? (
        <Divider key={i} />
      ) : n === "v" ? (
        <ToolButton key={i} $w={12} aria-label="More"><Arrow d="M1 2h6L4 6z" /></ToolButton>
      ) : (
        <ToolButton key={i} aria-label={n} $on={on.includes(n)} $w={wide.includes(n) ? 30 : 28}>{icons[n]}</ToolButton>
      )
    )}
  </>
);

const menus = ["_File", "_Edit", "_View", "_Place", "_MCU", "_Simulate", "Tra_nsfer", "_Tools", "_Reports", "_Options", "_Window", "_Help"];

const fields: [string, string, string][] = [
  ["Voltage (Pk):", "12m", "V"],
  ["Voltage offset:", "0.01", "V"],
  ["Frequency (F):", "1k", "Hz"],
  ["Time delay:", "0", "s"],
  ["Damping factor (1/s):", "0", ""],
  ["Phase:", "0", "º"],
  ["AC analysis magnitude:", "1m", "V"],
  ["AC analysis phase:", "0", "º"],
  ["Distortion frequency 1 magnitude:", "0", "V"],
  ["Distortion frequency 1 phase:", "0", "º"],
  ["Distortion frequency 2 magnitude:", "0", "V"],
  ["Distortion frequency 2 phase:", "0", "º"],
  ["Tolerance:", "0", "%"],
];

const GripButtons = ({ label }: { label: string }) => (
  <Grip>
    <SmallButton aria-label="Close"><Cross /></SmallButton>
    <SmallButton aria-label="Collapse"><Arrow d={LEFT} /></SmallButton>
    <GripLabel>{label}</GripLabel>
  </Grip>
);

const ListIcon = ({ c, fill }: { c: string; fill: string }) => (
  <svg width="28" height="22" viewBox="0 0 28 22" fill="none" stroke={c} strokeWidth="1.500" aria-hidden="true">
    <path d="M3 2h10v13H3zM3 6h10M3 10h10" />
    <path d="M6 15h11v5H6z" fill={fill} />
    <path d="M26 16h-6m3-3l-3 3 3 3" />
  </svg>
);

const ValueDialog = () => {
  const offset = useRef<HTMLInputElement>(null);
  useEffect(() => {
    offset.current?.focus();
    offset.current?.select();
  }, []);
  return (
    <Dialog role="dialog" aria-label="AC_VOLTAGE">
      <DialogHead>
        <h1>AC_VOLTAGE</h1>
        <CloseButton aria-label="Close">
          <svg width="14" height="14" viewBox="0 0 14 14" stroke="#000" aria-hidden="true"><path d="M1 1l12 12M13 1L1 13" /></svg>
        </CloseButton>
      </DialogHead>
      <DialogTabs>
        <DialogTab $w={48}>Label</DialogTab>
        <DialogTab $w={50}>Display</DialogTab>
        <DialogTab $w={50} $on>Value</DialogTab>
        <DialogTab $w={46}>Fault</DialogTab>
        <DialogTab $w={49}>Pins</DialogTab>
        <DialogTab $w={52}>Variant</DialogTab>
      </DialogTabs>
      <Form>
        {fields.map(([label, value, unit], i) => (
          <Field key={label}>
            <label htmlFor={`f${i}`}>{label}</label>
            <Box id={`f${i}`} defaultValue={value} ref={i === 1 ? offset : undefined} />
            <span>{unit}</span>
          </Field>
        ))}
      </Form>
      <DialogButtons>
        <PushButton $main>Replace</PushButton>
        <PushButton>OK</PushButton>
        <PushButton>Cancel</PushButton>
        <PushButton>Help</PushButton>
      </DialogButtons>
    </Dialog>
  );
};

export default function App() {
  return (
    <Screen>
      <Global />
      <TitleBar>
        <svg width="19" height="19" viewBox="0 0 19 19" aria-hidden="true">
          <rect width="19" height="19" rx="1" fill="#4a4a78" />
          <path d="M0 4h19M0 8h19M0 12h8" stroke="#b8b8dc" />
          <path d="M3 0v19M12 0v10" stroke="#7878a8" />
          <path d="M8 17v-5h3v5M14 12v5h4v-5" stroke="#fff" fill="none" strokeWidth="1.500" />
        </svg>
        低噪前置放大 - Multisim - [低噪前置放大 *]
        <WindowButtons>
          <WindowButton aria-label="Minimize"><svg width="12" height="12" stroke="#999"><path d="M0 6.500h12" /></svg></WindowButton>
          <WindowButton aria-label="Restore"><svg width="13" height="13" fill="none" stroke="#999"><path d="M.5 3.500h9v9h-9zM3.500 3.500v-3h9v9h-3" /></svg></WindowButton>
          <WindowButton aria-label="Close"><svg width="13" height="13" stroke="#999"><path d="M.5.5l12 12M12.500.5l-12 12" /></svg></WindowButton>
        </WindowButtons>
      </TitleBar>
      <MenuBar>
        <SheetIcon s={16} />
        {menus.map((m) => {
          const i = m.indexOf("_");
          return (
            <MenuItem key={m}>{m.slice(0, i)}<u>{m[i + 1]}</u>{m.slice(i + 2)}</MenuItem>
          );
        })}
        <MdiButtons>
          <MdiButton aria-label="Minimize document"><svg width="12" height="12" stroke="#000" strokeWidth="2"><path d="M2 10h7" /></svg></MdiButton>
          <MdiButton aria-label="Restore document"><svg width="12" height="12" fill="none" stroke="#000"><path d="M.5 5.500h7v5h-7zM.5 6.500h7M3.500 5.500v-4h8v5h-4M3.500 2.500h8" /></svg></MdiButton>
          <MdiButton aria-label="Close document"><svg width="12" height="12" stroke="#000" strokeWidth="2"><path d="M1 1l10 10M11 1L1 11" /></svg></MdiButton>
        </MdiButtons>
      </MenuBar>

      <ToolRow>
        <Toolbar>
          <Tools list={["page", "open", "sample", "save", "|", "print", "preview", "|", "cut", "copy", "paste", "|", "undo", "redo"]} />
        </Toolbar>
        <Toolbar>
          <Tools
            list={["toolbox", "sheetview", "spice", "grapher", "calc", "hier", "|", "star", "db"]}
            on={["toolbox", "sheetview"]}
            wide={["grapher", "calc"]}
          />
          <SelectWrap>
            <InUseList aria-label="In use list"><option>--- In-Use List ---</option></InUseList>
            <svg width="10" height="8" viewBox="0 0 10 8" fill="none" stroke="#555"><path d="M1 2l4 4 4-4" /></svg>
          </SelectWrap>
          <Tools list={["|", "erc", "out", "v", "back", "fwd", "v", "|", "find", "help"]} wide={["fwd", "find"]} />
        </Toolbar>
        <Toolbar $push={360}>
          <Tools list={["zin", "zout", "zarea", "zfit", "full"]} />
        </Toolbar>
      </ToolRow>
      <ToolRow>
        <Toolbar>
          <Tools list={["source", "basic", "diode", "bjt", "analog", "ttl", "cmos", "misc01", "mixed", "ind", "power", "misc", "adv", "rf", "motor", "ni", "conn", "|", "mcu", "|", "block", "bus"]} />
        </Toolbar>
        <Toolbar>
          <Tools list={["play", "pause", "stop"]} on={["stop"]} />
          <Interactive>
            <svg width="14" height="14" viewBox="0 0 14 14" fill="#fff" stroke="#000" aria-hidden="true">
              <path d="M1 11l5-5c-1-3 1-5 4-5L8 4l2 2 3-2c0 3-2 5-5 4l-5 5z" />
            </svg>
            Interactive
          </Interactive>
        </Toolbar>
        <Toolbar>
          <Tools list={["pv", "pa", "pw", "pvv", "pva", "pref", "pdig", "pset"]} />
        </Toolbar>
      </ToolRow>
      <ToolRow>
        <Toolbar>
          <Tools list={["f1", "f2", "f3", "f4", "f5", "f6", "f7"]} />
        </Toolbar>
      </ToolRow>

      <Main>
        <Side>
          <SideHead>
            <SideTitle>Design Toolbox</SideTitle>
            <SmallButton aria-label="Collapse"><Arrow d="M0 6h8L4 2z" c="#999" /></SmallButton>
            <SmallButton aria-label="Close"><Cross /></SmallButton>
          </SideHead>
          <SideBody>
            <SideTools>
              <SideTool aria-label="New">
                <Svg><path d="M2 2h10l5 5v11H2z" fill="#fff" stroke={NAVY} strokeWidth="1.800" /><path d="M11 17l6-6v7z" fill="#e8e800" stroke="none" /></Svg>
              </SideTool>
              <SideTool aria-label="Open">{icons.open}</SideTool>
              <SideTool aria-label="Save">{icons.save}</SideTool>
              <SideTool aria-label="Close design">
                <Svg><rect x="1" y="7" width="14" height="12" fill="#fff" /><path d="M1 7h14" stroke={NAVY} strokeWidth="3.500" /><path d="M3 12h9M3 15h9" stroke="#888" /><path d="M19 7l-4-4m0 3V2h4" stroke="#900" strokeWidth="1.800" /></Svg>
              </SideTool>
              <SideTool aria-label="Recent">
                <Svg><path d="M1 1h11v12H1zM4 4h11v12H4zM7 7h11v12H7z" fill="#f4f4d8" stroke="#808020" /><circle cx="13.500" cy="13.500" r="5" fill="#f0f000" stroke={NAVY} strokeWidth="1.600" /><path d="M13.500 10v4h3" /></Svg>
              </SideTool>
            </SideTools>
            <Tree>
              <TreeRow $level={0}>
                <svg width="11" height="12" fill="none" stroke="#888" aria-hidden="true"><path d="M0 1.500h3.500v9H0" /><path d="M5 6.500h5" strokeDasharray="1 1" /></svg>
                <Svg><rect x="3" y="3" width="14" height="16" rx="1" fill="#fff" strokeWidth="1.500" /><path d="M6 4l2-3h4l2 3z" fill="#ddd" /><path d="M6 10l3 4 6-8" strokeWidth="1.800" /></Svg>
                <TreeText>低噪前置放大</TreeText>
              </TreeRow>
              <TreeRow $level={1}>
                <svg width="13" height="22" fill="none" stroke="#888" aria-hidden="true"><path d="M1.500 0v11.500H13" strokeDasharray="1 1" /></svg>
                <SheetIcon />
                <TreeText $sel>低噪前置放大</TreeText>
              </TreeRow>
              <HScroll><Chevron d="M8 1L3 6l5 5" /><i /><Chevron d="M4 1l5 5-5 5" /></HScroll>
            </Tree>
          </SideBody>
          <Tabs>
            <Tab $w={67} $on>Hierarchy</Tab>
            <Tab $w={50}>Visibility</Tab>
            <Spin aria-label="Previous tab"><Arrow d={LEFT} /></Spin>
            <Spin aria-label="Next tab"><Arrow d={RIGHT} /></Spin>
          </Tabs>
        </Side>

        <Doc>
          <DocView>
            <PaperClip>
              <Margin />
              <Schematic />
              <Margin $right />
            </PaperClip>
            <VScroll><Chevron d="M2 9l4-5 4 5" /><i /><Chevron d="M2 3l4 5 4-5" /></VScroll>
          </DocView>
          <DocTabs>
            <DocTab><SheetIcon />低噪前置放大 *</DocTab>
            <ToolButton aria-label="Cascade windows" $w={18}>
              <Svg s={16}><path d="M1 3h10v8H1zM5 7h10v8H5zM9 11h9v7H9z" fill="#fff" stroke={NAVY} strokeWidth="2" /></Svg>
            </ToolButton>
          </DocTabs>
        </Doc>

        <Instruments>
          {instruments.map((it) => (
            <InstrumentButton key={it.name} aria-label={it.name}><InstrumentIcon {...it} /></InstrumentButton>
          ))}
          <Rule />
          <InstrumentButton aria-label="LabVIEW instruments" $h={42} $on>
            <Svg>
              <rect x="2" y="2" width="16" height="16" fill="#000" stroke="#888" strokeDasharray="2 1" strokeWidth="1.500" />
              <path d="M7 4v12l8-6z" fill="#f0f000" />
              <path d="M0 7h6M15 10h5" stroke="#e00000" strokeWidth="1.500" />
              <path d="M0 13h6" stroke="#2020d0" strokeWidth="1.500" />
            </Svg>
            <Arrow d="M2 1v6l4-3z" />
          </InstrumentButton>
          <Rule />
          <InstrumentButton aria-label="NI ELVISmx instruments" $h={42}>
            <Svg><path d="M1 8l5 5 7-2 6-6M7 16l5-6 5 4M11 3l5 4" stroke="#a8a8a8" strokeWidth="1.500" /></Svg>
            <Arrow d="M2 1v6l4-3z" c="#999" />
          </InstrumentButton>
          <Rule />
          <InstrumentButton aria-label="Current clamp">
            <Svg><circle cx="6" cy="14" r="4.500" fill="#a00000" /><path d="M3.500 14h5M6 11.500v5" stroke="#fff" /><path d="M9 11l3-6V2l3 2 4-1" strokeWidth="1.600" /><path d="M10 15h10" stroke="#d02020" strokeWidth="1.500" /></Svg>
          </InstrumentButton>
          <Rule />
        </Instruments>
      </Main>

      <Dock>
        <DockPane $grow="0 1 1202px">
          <GripButtons label="Sp" />
          <DockBody>
            <ResultBox><div /></ResultBox>
            <Tabs>
              <Tab $w={54} $on>Results</Tab>
              <Tab $w={46}>Nets</Tab>
              <Tab $w={81}>Components</Tab>
              <Tab $w={89}>Copper layers</Tab>
              <Tab $w={70}>Simulation</Tab>
            </Tabs>
          </DockBody>
        </DockPane>
        <DockPane $grow="1 1 0">
          <GripButtons label="Ci" />
          <DockBody>
            <CircuitBox>
              <CircuitTools>
                <ListIcon c="#000" fill="#4aa0f0" />
                <ListIcon c="#a8a8a8" fill="#a8a8a8" />
                <ListIcon c="#a8a8a8" fill="#a8a8a8" />
                <svg width="20" height="20" viewBox="0 0 20 20" aria-hidden="true">
                  <circle cx="10" cy="10" r="9" fill="#2450b8" stroke="#8894a8" strokeWidth="2" />
                  <text x="10" y="15" textAnchor="middle" fontSize="14" fontWeight="bold" fontFamily="Liberation Sans" fill="#fff">?</text>
                </svg>
              </CircuitTools>
              <CircuitList />
            </CircuitBox>
          </DockBody>
        </DockPane>
      </Dock>
      <Status>
        <span>{"Component: RefDes(V3); Value(12mVpk  1kHz  0° ); Location(D2)"}</span>
        <svg width="46" height="16" aria-hidden="true"><path d="M1 1v14M9 1v14M17 1v14M25 1v14M33 1v14M41 1v14" stroke="#b0b0b0" /></svg>
      </Status>

      <ValueDialog />
      <Watermark>https://blog.csdn.net/zhi12345678</Watermark>
    </Screen>
  );
}
